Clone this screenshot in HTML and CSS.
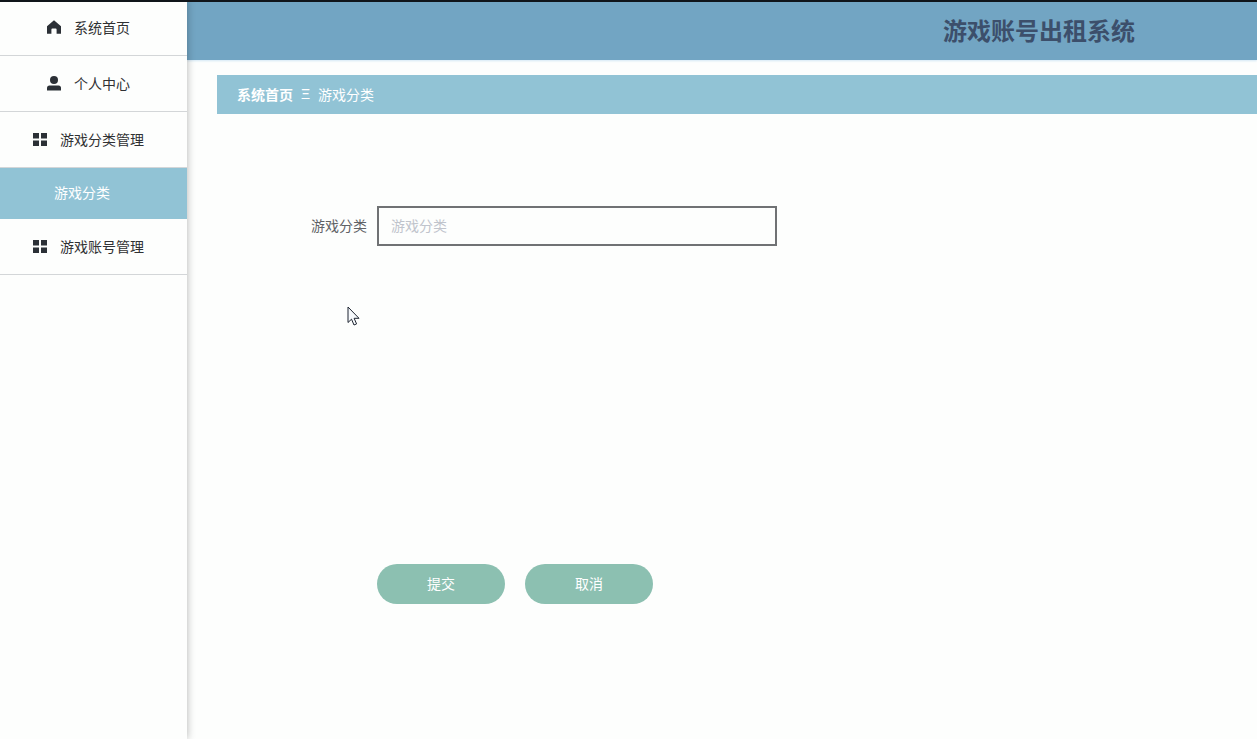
FILE: index.html
```html
<!DOCTYPE html>
<html lang="zh-CN">
<head>
    <meta charset="UTF-8">
    <meta name="viewport" content="width=device-width, initial-scale=1.0">
    <title>游戏账号出租系统</title>
    <link rel="stylesheet" href="styles.css">
</head>
<body>
    <div class="top-line"></div>
    <div class="layout">
        <nav class="sidebar">
            <ul class="menu">
                <li>
                    <a class="menu-item" href="#">
                        <svg class="icon" viewBox="0 0 16 16"><path d="M8 1.200 1 7.200v7.600h4.400V10.500q0-1 1-1h3.200q1 0 1 1v4.300H15V7.200z"/></svg>
                        <span>系统首页</span>
                    </a>
                </li>
                <li>
                    <a class="menu-item" href="#">
                        <svg class="icon" viewBox="0 0 16 16"><circle cx="8" cy="5" r="4"/><path d="M1 15.500v-2.500q0-2.500 2.500-2.500h9q2.500 0 2.500 2.500v2.500z"/></svg>
                        <span>个人中心</span>
                    </a>
                </li>
                <li>
                    <a class="menu-item" href="#">
                        <svg class="icon" viewBox="0 0 16 16"><path d="M1 2h6v5.500H1zM9 2h6v5.500H9zM1 9.500h6v5.500H1zM9 9.500h6v5.500H9z"/></svg>
                        <span>游戏分类管理</span>
                    </a>
                    <a class="submenu-item" href="#">游戏分类</a>
                </li>
                <li>
                    <a class="menu-item" href="#">
                        <svg class="icon" viewBox="0 0 16 16"><path d="M1 2h6v5.500H1zM9 2h6v5.500H9zM1 9.500h6v5.500H1zM9 9.500h6v5.500H9z"/></svg>
                        <span>游戏账号管理</span>
                    </a>
                </li>
            </ul>
        </nav>

        <div class="main">
            <header class="header">
                <h1>游戏账号出租系统</h1>
            </header>

            <div class="breadcrumb">
                <a href="#">系统首页</a>
                <span class="separator">Ξ</span>
                <span>游戏分类</span>
            </div>

            <form class="form">
                <div class="form-item">
                    <label for="category">游戏分类</label>
                    <input type="text" id="category" placeholder="游戏分类">
                </div>
                <div class="form-buttons">
                    <button type="submit">提交</button>
                    <button type="button">取消</button>
                </div>
            </form>
        </div>
    </div>

    <svg class="cursor" viewBox="0 0 13 20"><path d="M1 1v15.500l3.500-3.300 2.500 5.800 2.600-1.100-2.500-5.600H12z"/></svg>
</body>
</html>
```

FILE: styles.css
```css
* {
    box-sizing: border-box;
}
body {
    margin: 0;
    background: #fdfefd;
    font-family: "Noto Sans CJK SC", sans-serif;
    font-size: 14px;
    color: #606266;
}
a {
    color: inherit;
    text-decoration: none;
}
.top-line {
    position: absolute;
    z-index: 2;
    top: 0;
    left: 0;
    right: 0;
    height: 2px;
    background: #10151a;
}
.layout {
    display: flex;
    min-height: 100vh;
}

/* sidebar */
.sidebar {
    position: relative;
    z-index: 1;
    flex: none;
    width: 187px;
    background: #fdfefd;
    box-shadow: 0 0 8px rgba(0, 0, 0, 0.3);
}
.menu {
    margin: 0;
    padding: 0;
    list-style: none;
}
.menu-item {
    display: flex;
    align-items: center;
    justify-content: center;
    gap: 12px;
    height: 56px;
    padding: 0 11px 1px 0;
    border-bottom: 1px solid #d3d6d8;
    color: #303133;
}
.icon {
    width: 16px;
    height: 16px;
    fill: #2b3036;
}
.submenu-item {
    display: block;
    height: 51px;
    padding-left: 54px;
    line-height: 49px;
    background: #91c3d5;
    color: #fff;
}

/* content */
.main {
    flex: 1;
    min-width: 0;
}
.header {
    display: flex;
    align-items: center;
    justify-content: flex-end;
    height: 60px;
    padding: 0 122px 2px 0;
    background: #72a5c3;
    box-shadow: 0 1px 2px #d4e8f5;
}
.header h1 {
    margin: 0;
    font-size: 24px;
    color: #3c4f6b;
}
.breadcrumb {
    display: flex;
    align-items: center;
    gap: 8px;
    height: 39px;
    margin: 15px 0 0 30px;
    padding: 0 20px 2px;
    background: #91c3d5;
    color: #fff;
}
.breadcrumb a {
    font-weight: bold;
}
.separator {
    font-family: "Liberation Sans", sans-serif;
}
.form {
    padding: 92px 30px 0;
}
.form-item {
    display: flex;
    align-items: center;
}
.form-item label {
    width: 160px;
    padding: 0 10px 2px 0;
    text-align: right;
}
.form-item input {
    width: 400px;
    height: 40px;
    padding: 0 12px 2px;
    border: 2px solid #707274;
    background: transparent;
    font: inherit;
    color: #606266;
}
.form-item input::placeholder {
    color: #c0c4cc;
}
.form-buttons {
    display: flex;
    gap: 20px;
    margin-top: 318px;
    padding-left: 160px;
}
.form-buttons button {
    width: 128px;
    height: 40px;
    padding: 0 0 2px;
    border: none;
    border-radius: 20px;
    background: #8cc0b1;
    font: inherit;
    color: #fff;
    cursor: pointer;
}

/* mouse pointer over the form */
.cursor {
    position: absolute;
    z-index: 3;
    top: 306px;
    left: 347px;
    width: 13px;
    height: 20px;
    fill: #f6f9fc;
    stroke: #1d2430;
}
```
